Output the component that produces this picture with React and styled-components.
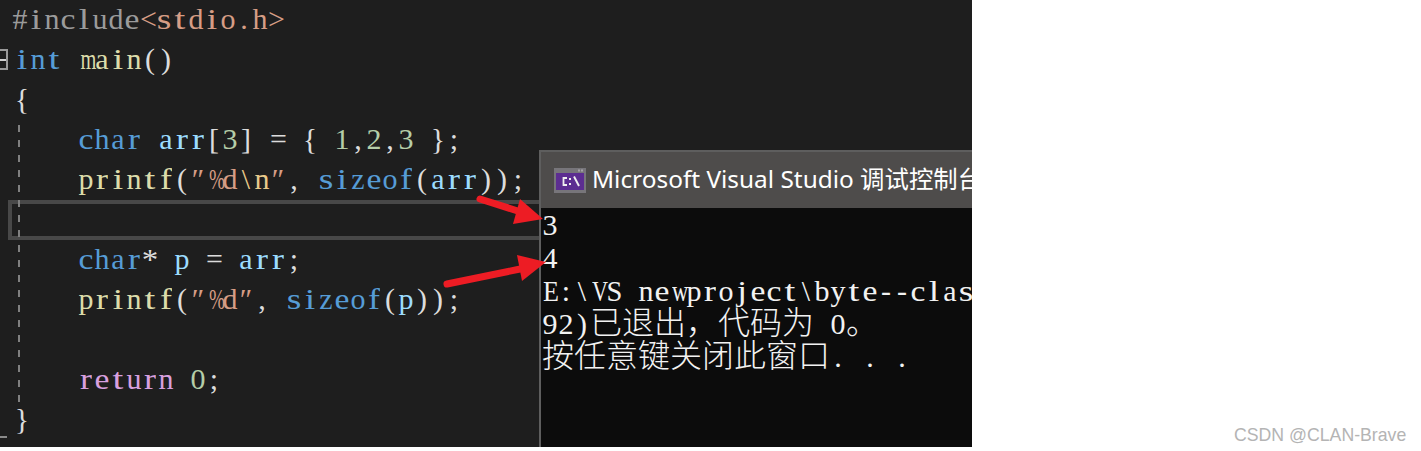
import React from 'react';
import styled, { createGlobalStyle } from 'styled-components';

const GlobalStyle = createGlobalStyle`
  html, body {
    margin: 0;
    padding: 0;
    background: #fff;
  }
`;

const Page = styled.div`
  display: flex;
  width: 1421px;
  height: 451px;
  overflow: hidden;
  background: #fff;
`;

const Editor = styled.div`
  position: relative;
  flex: 0 0 972px;
  height: 447px;
  overflow: hidden;
  background: #1e1e1e;
`;

const CodeLine = styled.div`
  box-sizing: border-box;
  height: 40px;
  padding-left: ${(p) => p.$left}px;
  font-family: 'Liberation Serif', serif;
  font-size: 30px;
  line-height: 37px;
  white-space: pre;
  color: #dcdcdc;
`;

const CurrentLine = styled.div`
  box-sizing: border-box;
  height: 40px;
  margin-left: 8px;
  border: 4px solid #484848;
`;

// every character sits in a half-width cell, as in a bitmap console font
const Cell = styled.span`
  display: inline-block;
  width: 16px;
  text-align: center;
  color: ${(p) => p.$c || 'inherit'};
  transform: scaleX(${(p) => p.$sx || 1});
`;

const IndentGuide = styled.div`
  position: absolute;
  left: 18px;
  top: 125px;
  width: 2px;
  height: 280px;
  background: repeating-linear-gradient(to bottom, #808080 0 7px, transparent 7px 15px);
`;

const FoldBox = styled.div`
  position: absolute;
  left: -3px;
  top: 49px;
  width: 11px;
  height: 21px;
  box-sizing: border-box;
  border: 2px solid #9a9a9a;
  &::after {
    content: '';
    position: absolute;
    left: 0;
    right: 0;
    top: 7.5px;
    height: 2px;
    background: #d0d0d0;
  }
`;

const FoldEnd = styled.div`
  position: absolute;
  left: 0;
  top: 436px;
  width: 7px;
  height: 2px;
  background: #8a8a8a;
`;

const ConsoleWindow = styled.div`
  position: absolute;
  left: 539px;
  top: 150px;
  width: 440px;
  height: 297px;
  box-sizing: border-box;
  border: 2px solid #5e5e5e;
  border-bottom: 0;
  background: #0c0c0c;
`;

const TitleBar = styled.div`
  display: flex;
  align-items: center;
  gap: 6px;
  height: 56px;
  padding: 0 0 5px 13px;
  box-sizing: border-box;
  background: #4e4c4b;
  color: #fff;
  font-family: 'Noto Sans', 'Noto Sans CJK SC', sans-serif;
  font-size: 24.4px;
  white-space: nowrap;
  svg {
    flex: none;
    margin-top: 5px;
  }
`;

const ConsoleBody = styled.div`
  padding: 0 0 0 1px;
  font-family: 'Liberation Serif', 'Noto Sans CJK SC', serif;
  font-size: 30px;
  color: #f2f2f2;
  white-space: pre;
`;

const ConsoleLine = styled.div`
  height: 33px;
  line-height: 33px;
`;

const Cjk = styled.span`
  font-family: 'Noto Sans CJK SC', sans-serif;
  font-size: 32px;
  font-weight: 300;
  line-height: 0;
`;

const ArrowLayer = styled.svg`
  position: absolute;
  left: 0;
  top: 0;
  width: 972px;
  height: 447px;
  pointer-events: none;
`;

const Watermark = styled.div`
  align-self: flex-end;
  margin-left: 262px;
  margin-bottom: 6px;
  font-family: 'Liberation Sans', Arial, sans-serif;
  font-size: 17.7px;
  line-height: 20px;
  color: #b4b4b4;
  white-space: nowrap;
`;

const KW = '#569cd6';
const VAR = '#9cdcfe';
const FN = '#dcdcaa';
const NUM = '#b5cea8';
const STR = '#d69d85';
const PRE = '#9b9b9b';
const ESC = '#e8c98a';
const RET = '#d8a0df';

// letters wider than the 16px cell get squeezed, thin ones stretched to fill it
const SQUEEZE = {
  m: 0.68, w: 0.75, '%': 0.64, V: 0.74, S: 0.95, E: 0.87, '*': 1.1,
  i: 1.25, t: 1.3, f: 1.2, r: 1.2, l: 1.25, s: 1.25, c: 1.12, e: 1.12, j: 1.2,
};

const glyphs = (text, color) =>
  Array.from(text).map((ch, i) => (
    <Cell key={i} $c={color} $sx={SQUEEZE[ch]}>
      {ch}
    </Cell>
  ));

const code = [
  { left: 12, toks: [['#include', PRE], ['<stdio.h>', STR]] },
  { left: 14, toks: [['int', KW], [' '], ['main', FN], ['()']] },
  { left: 14, toks: [['{']] },
  { left: 78, toks: [['char', KW], [' '], ['arr', VAR], ['['], ['3', NUM], ['] = { '], ['1', NUM], [','], ['2', NUM], [','], ['3', NUM], [' };']] },
  { left: 78, toks: [['printf', FN], ['('], ['″%d', STR], ['\\n', ESC], ['″', STR], [', '], ['sizeof', KW], ['('], ['arr', VAR], ['));']] },
  { current: true },
  { left: 78, toks: [['char', KW], ['* '], ['p', VAR], [' = '], ['arr', VAR], [';']] },
  { left: 78, toks: [['printf', FN], ['('], ['″%d″', STR], [', '], ['sizeof', KW], ['('], ['p', VAR], ['));']] },
  { left: 78, toks: [] },
  { left: 78, toks: [['return', RET], [' '], ['0', NUM], [';']] },
  { left: 14, toks: [['}']] },
];

function ConsoleIcon() {
  return (
    <svg width="32" height="25" viewBox="0 0 32 25">
      <rect width="32" height="25" fill="#77757a" />
      <rect x="2" y="5" width="28" height="17" fill="#5c2d91" />
      <rect x="24" y="1.5" width="2" height="2" fill="#a5a3a8" />
      <rect x="27" y="1.5" width="2" height="2" fill="#a5a3a8" />
      <path d="M13 10H9.5V17H13" fill="none" stroke="#eee" strokeWidth="1.8" />
      <rect x="15" y="10" width="2" height="2" fill="#eee" />
      <rect x="15" y="15" width="2" height="2" fill="#eee" />
      <path d="M20 8.5L25 18" stroke="#eee" strokeWidth="1.9" />
    </svg>
  );
}

export default function App() {
  return (
    <Page>
      <GlobalStyle />
      <Editor>
        {code.map((line, i) =>
          line.current ? (
            <CurrentLine key={i} />
          ) : (
            <CodeLine key={i} $left={line.left}>
              {line.toks.map(([text, color], j) => (
                <React.Fragment key={j}>{glyphs(text, color)}</React.Fragment>
              ))}
            </CodeLine>
          )
        )}

        <IndentGuide />
        <FoldBox />
        <FoldEnd />

        <ConsoleWindow>
          <TitleBar>
            <ConsoleIcon />
            <span>Microsoft Visual Studio 调试控制台</span>
          </TitleBar>
          <ConsoleBody>
            <ConsoleLine>{glyphs('3')}</ConsoleLine>
            <ConsoleLine>{glyphs('4')}</ConsoleLine>
            <ConsoleLine>{glyphs('E:\\VS newproject\\byte--clas')}</ConsoleLine>
            <ConsoleLine>
              {glyphs('92)')}
              <Cjk>已退出，代码为</Cjk>
              {glyphs(' 0')}
              <Cjk>。</Cjk>
            </ConsoleLine>
            <ConsoleLine>
              <Cjk>按任意键关闭此窗口</Cjk>
              {glyphs('. . .')}
            </ConsoleLine>
          </ConsoleBody>
        </ConsoleWindow>

        <ArrowLayer viewBox="0 0 972 447">
          <path d="M480 199L524 213" stroke="#ed1c24" strokeWidth="7" strokeLinecap="round" />
          <path d="M543 219L520 199L513 224Z" fill="#ed1c24" />
          <path d="M447 284L525 268" stroke="#ed1c24" strokeWidth="7" strokeLinecap="round" />
          <path d="M546 262L517 255L522 281Z" fill="#ed1c24" />
        </ArrowLayer>
      </Editor>
      <Watermark>CSDN @CLAN-Brave</Watermark>
    </Page>
  );
}
